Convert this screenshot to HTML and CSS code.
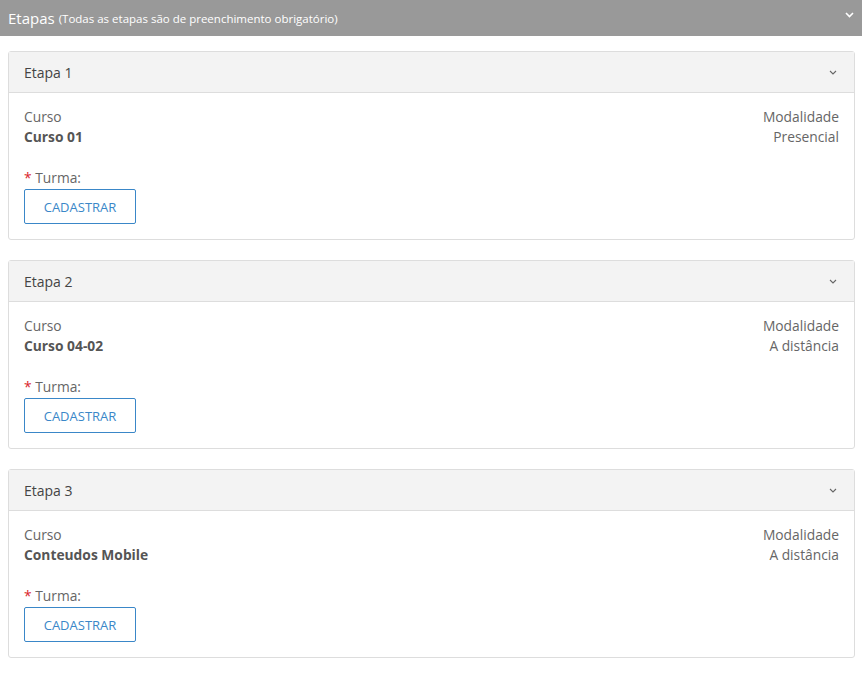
FILE: index.html
```html
<!DOCTYPE html>
<html>
<head>
  <title>Etapas</title>
  <link rel="stylesheet" href="styles.css">
</head>
<body>
  <div class="section-bar">
    <span class="section-title">Etapas</span>
    <span class="section-note">(Todas as etapas são de preenchimento obrigatório)</span>
    <svg class="bar-chevron" width="9" height="6" viewBox="0 0 9 6"><path d="M1 1 L4.5 4.5 L8 1" fill="none" stroke="#fff" stroke-width="1.6"/></svg>
  </div>

  <div class="steps">

    <div class="step">
      <div class="step-head">
        <span>Etapa 1</span>
        <svg class="chevron" width="8" height="5" viewBox="0 0 8 5"><path d="M1 1 L4 4 L7 1" fill="none" stroke="#666" stroke-width="1.1"/></svg>
      </div>
      <div class="step-body">
        <div class="info">
          <div>
            <div class="label">Curso</div>
            <div class="value">Curso 01</div>
          </div>
          <div class="right">
            <div class="label">Modalidade</div>
            <div class="label">Presencial</div>
          </div>
        </div>
        <div class="field-label"><span class="req">*</span> Turma:</div>
        <button class="btn">CADASTRAR</button>
      </div>
    </div>

    <div class="step">
      <div class="step-head">
        <span>Etapa 2</span>
        <svg class="chevron" width="8" height="5" viewBox="0 0 8 5"><path d="M1 1 L4 4 L7 1" fill="none" stroke="#666" stroke-width="1.1"/></svg>
      </div>
      <div class="step-body">
        <div class="info">
          <div>
            <div class="label">Curso</div>
            <div class="value">Curso 04-02</div>
          </div>
          <div class="right">
            <div class="label">Modalidade</div>
            <div class="label">A distância</div>
          </div>
        </div>
        <div class="field-label"><span class="req">*</span> Turma:</div>
        <button class="btn">CADASTRAR</button>
      </div>
    </div>

    <div class="step">
      <div class="step-head">
        <span>Etapa 3</span>
        <svg class="chevron" width="8" height="5" viewBox="0 0 8 5"><path d="M1 1 L4 4 L7 1" fill="none" stroke="#666" stroke-width="1.1"/></svg>
      </div>
      <div class="step-body">
        <div class="info">
          <div>
            <div class="label">Curso</div>
            <div class="value">Conteudos Mobile</div>
          </div>
          <div class="right">
            <div class="label">Modalidade</div>
            <div class="label">A distância</div>
          </div>
        </div>
        <div class="field-label"><span class="req">*</span> Turma:</div>
        <button class="btn">CADASTRAR</button>
      </div>
    </div>

  </div>
</body>
</html>
```

FILE: styles.css
```css
body {
  margin: 0;
  background-color: #fff;
  font-family: "Open Sans", "Noto Sans", sans-serif;
  color: #555;
}

.section-bar {
  display: flex;
  align-items: center;
  height: 36px;
  padding: 0 8px;
  background-color: #999;
  color: #fff;
}

.section-title {
  font-size: 15px;
  margin-right: 4px;
}

.section-note {
  font-size: 11.5px;
}

.bar-chevron {
  margin-left: auto;
  margin-top: -7px;
}

.steps {
  padding: 15px 7px 0 8px;
}

.step {
  border: 1px solid #ddd;
  border-radius: 3px;
  margin-bottom: 20px;
}

.step-head {
  display: flex;
  align-items: center;
  justify-content: space-between;
  height: 40px;
  padding: 0 17px 0 15px;
  background-color: #f3f3f3;
  border-bottom: 1px solid #ddd;
  font-size: 14px;
  color: #444;
}

.step-body {
  padding: 14px 15px 15px 15px;
  font-size: 13.8px;
  line-height: 20px;
}

.info {
  display: flex;
  justify-content: space-between;
}

.right {
  text-align: right;
}

.label {
  color: #666;
}

.value {
  font-weight: bold;
  color: #555;
}

.field-label {
  margin-top: 21px;
  color: #666;
}

.req {
  color: #d9262c;
}

.btn {
  display: block;
  width: 112px;
  height: 35px;
  margin-top: 1px;
  background-color: #fff;
  border: 1px solid #3a87c8;
  border-radius: 2px;
  color: #3a87c8;
  font-family: inherit;
  font-size: 13px;
  cursor: pointer;
}
```
